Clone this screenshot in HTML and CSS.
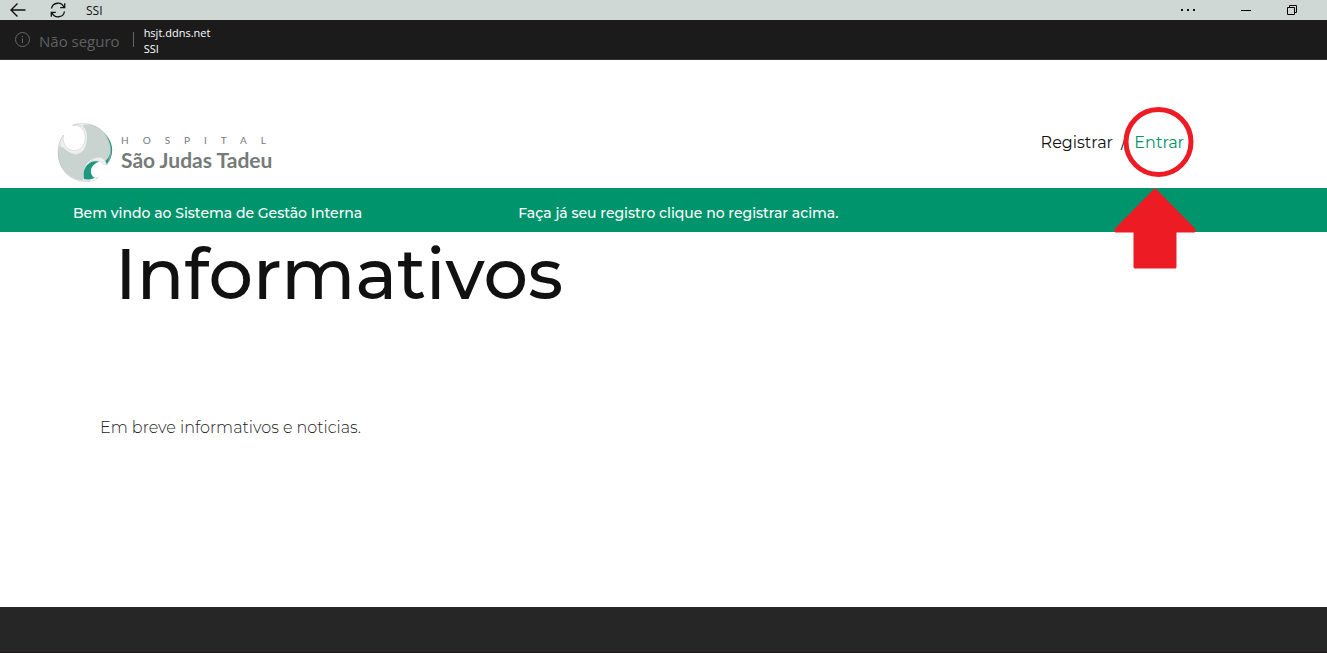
FILE: index.html
```html
<!DOCTYPE html>
<html lang="pt-BR">
<head>
<meta charset="utf-8">
<meta name="viewport" content="width=device-width, initial-scale=1">
<title>SSI</title>
<link rel="stylesheet" href="styles.css">
</head>
<body>
<div class="titlebar">
  <button class="icon-button" type="button" aria-label="Voltar">
    <svg width="16" height="14" viewBox="0 0 16 14" fill="none" stroke="#111" stroke-width="1.4"><path d="M15.500 7H1M7.500 .5L1 7l6.500 6.500"/></svg>
  </button>
  <button class="icon-button" type="button" aria-label="Atualizar">
    <svg width="16" height="16" viewBox="0 0 16 16" fill="none" stroke="#111" stroke-width="1.300"><path d="M1.500 6.500A6.500 6.500 0 0 1 14 5.500M14.500 9.500A6.500 6.500 0 0 1 2 10.500M14.700 1.200v4.500h-4.500M1.300 14.800v-4.500h4.500"/></svg>
  </button>
  <span class="titlebar-title">SSI</span>
  <div class="window-controls">
    <button class="icon-button" type="button" aria-label="Mais opções">
      <svg width="14" height="2" viewBox="0 0 14 2" fill="#111"><path d="M0 0h2v2H0zM6 0h2v2H6zM12 0h2v2h-2z"/></svg>
    </button>
    <button class="icon-button" type="button" aria-label="Minimizar">
      <svg width="10" height="1" viewBox="0 0 10 1"><path d="M0 0h10v1H0z"/></svg>
    </button>
    <button class="icon-button" type="button" aria-label="Restaurar">
      <svg width="10" height="10" viewBox="0 0 10 10" fill="none" stroke="#000"><path d="M.5 2.500h7v7h-7zM2.500 2.500v-2h7v7h-2"/></svg>
    </button>
  </div>
</div>

<div class="addressbar">
  <svg class="info-icon" width="15" height="15" viewBox="0 0 15 15" fill="none" stroke="#666"><circle cx="7.500" cy="7.500" r="7"/><path d="M7.500 6.500v4.500M7.500 4v1.200"/></svg>
  <span class="security">Não seguro</span>
  <div class="site"><span>hsjt.ddns.net</span><span>SSI</span></div>
</div>

<header class="header">
  <a class="brand" href="#">
    <svg width="57" height="60" viewBox="18 18 171 180" aria-hidden="true">
      <path d="M162 50C192 78 194 118 170 147L158 132Z" fill="#20977f"/>
      <path d="M98 27C130 20 160 40 172 66C187 96 184 122 163 138C150 118 122 125 108 148C101 162 99 178 101 193C64 194 26 160 24 118C23 104 26 94 31 84C44 90 54 118 82 115C108 108 116 60 98 27Z" fill="#c9d3cf"/>
      <path d="M68 28C118 12 158 36 172 66C187 96 184 122 170 147M40 58C22 82 20 116 32 146C47 182 82 202 120 193" fill="none" stroke="#bcbfbe" stroke-width="2"/>
      <path d="M40 58C32 70 28 84 31 94C46 94 54 118 82 115C106 110 115 82 111 52C107 28 86 20 68 28C84 26 100 34 104 52C109 76 101 99 77 104C53 106 36 86 40 58Z" fill="#efeff0" stroke="#c5c7c7" stroke-width="1.500"/>
      <path d="M170 147C164 116 132 118 117 141C128 132 146 130 156 141C162 146 167 147 170 147Z" fill="#efeff0" stroke="#cfcfd0" stroke-width="1.500"/>
      <path d="M147 137C126 144 117 163 126 178C128 182 132 185 135 185C126 190 114 191 102 190C98 168 104 149 120 140C129 135 139 135 147 137Z" fill="#20977f"/>
      <path d="M101 194C120 198 136 196 145 184L133 186" fill="none" stroke="#cfcfd0" stroke-width="2"/>
    </svg>
    <span class="brand-text"><span class="brand-top">HOSPITAL</span><span class="brand-name">São Judas Tadeu</span></span>
  </a>
  <nav class="account">
    <a href="#">Registrar</a>
    <span class="slash">/</span>
    <a class="login" href="#">Entrar
      <svg class="marker" width="82" height="164" viewBox="0 0 82 164" fill="#ed1c24" stroke="#ed1c24" aria-hidden="true">
        <circle cx="44.500" cy="36" r="32.500" fill="none" stroke-width="5"/>
        <path d="M41 84L80 123.500V125H61V161H21V125H2v-1.500Z" stroke-width="3" stroke-linejoin="round"/>
      </svg>
    </a>
  </nav>
</header>

<div class="banner">
  <span>Bem vindo ao Sistema de Gestão Interna</span>
  <span>Faça já seu registro clique no registrar acima.</span>
</div>

<main class="content">
  <h1 class="heading">Informativos</h1>
  <p class="notice">Em breve informativos e noticias.</p>
</main>
<footer class="footer"></footer>
</body>
</html>
```
FILE: styles.css
```css
* { box-sizing: border-box; }
body {
  display: flex;
  flex-direction: column;
  min-height: 100vh;
  margin: 0;
  background: #fff;
  color: #111;
  font-family: Montserrat, Inter, sans-serif;
}
a { color: inherit; text-decoration: none; }
svg { display: block; }
.icon-button { padding: 0; border: 0; background: none; }

.titlebar {
  display: flex;
  align-items: center;
  gap: 24px;
  height: 20px;
  padding: 0 30px 0 10px;
  background: #cfd8d4;
  font: 12px "Open Sans", sans-serif;
}
.titlebar-title { margin-left: -4px; }
.window-controls {
  display: flex;
  align-items: center;
  gap: 36px;
  margin-left: auto;
}
.window-controls .icon-button:first-child { margin-right: 10px; }

.addressbar {
  display: flex;
  align-items: center;
  height: 40px;
  padding: 0 15px;
  background: #1b1b1b;
  border-bottom: 1px solid #333;
  font-family: "Open Sans", sans-serif;
}
.security {
  margin: 3px 13px 0 9px;
  color: #606060;
  font-size: 15px;
}
.site {
  display: flex;
  flex-direction: column;
  position: relative;
  padding: 2px 0 0 11px;
  color: #fff;
  font-size: 11px;
  line-height: 16px;
}
.site::before {
  content: "";
  position: absolute;
  left: 0;
  top: 9px;
  height: 15px;
  border-left: 1px solid #666;
}

.header {
  display: flex;
  justify-content: space-between;
  align-items: flex-start;
  height: 128px;
  padding: 62px 143px 0 56px;
}
.brand { display: flex; gap: 8px; color: #757b78; }
.brand-text {
  display: flex;
  flex-direction: column;
  padding-top: 11px;
  font-family: Lato, sans-serif;
}
.brand-top { font-size: 10px; line-height: 14px; letter-spacing: 14px; }
.brand-name { font-size: 21px; line-height: 26px; font-weight: 700; }
.account {
  display: flex;
  gap: 8px;
  padding-top: 11px;
  font-size: 16px;
  line-height: 20px;
}
.login { position: relative; color: #00946c; }
.marker { position: absolute; right: -12px; top: -27px; }

.banner {
  display: flex;
  gap: 156px;
  padding: 15px 73px 9px;
  background: #00946c;
  color: #fff;
  font-size: 14px;
  font-weight: 500;
  line-height: 20px;
}

.content { flex: 1; padding: 0 100px; }
.heading {
  margin: 0;
  padding: 0 15px;
  font-size: 70px;
  font-weight: 500;
  line-height: 84px;
}
.notice {
  margin: 101px 0 0;
  color: #222;
  font-size: 16px;
  font-weight: 300;
  line-height: 22px;
}
.footer { height: 46px; background: #262626; border-bottom: 1px solid #1b1719; }
```
